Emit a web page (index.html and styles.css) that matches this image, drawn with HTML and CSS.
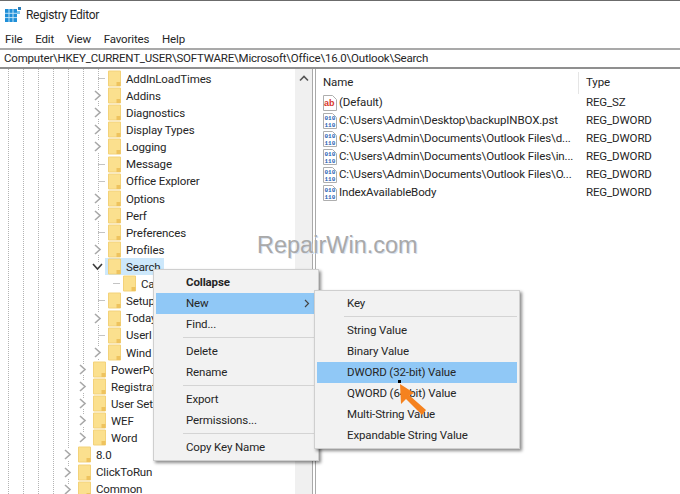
FILE: index.html
```
<!DOCTYPE html>
<html lang="en">
<head>
<meta charset="utf-8">
<title>Registry Editor</title>
<link rel="stylesheet" href="styles.css">
</head>
<body>
<svg class="defs" width="0" height="0" aria-hidden="true">
  <symbol id="folder" viewBox="0 0 13 17">
    <path d="M0.5 1h12v15h-12z" fill="#fbe08e" stroke="#f3d27a" stroke-width="1"/>
    <path d="M8.5 16v-4h4v4z" fill="#eec35e"/>
  </symbol>
  <symbol id="chev" viewBox="0 0 9 11">
    <path d="M2 1l5 4.500-5 4.500" fill="none" stroke="#a8a8a8" stroke-width="1.600"/>
  </symbol>
  <symbol id="chevopen" viewBox="0 0 11 9">
    <path d="M1 2l4.500 5 4.500-5" fill="none" stroke="#3c3c3c" stroke-width="1.600"/>
  </symbol>
  <symbol id="doc" viewBox="0 0 14 16">
    <path d="M0.500 0.500h9l4 4v11h-13z" fill="#fff" stroke="#aeaeae"/>
  </symbol>
</svg>

<div class="window">
  <header class="titlebar">
    <svg class="app-icon" width="18" height="18" viewBox="0 0 18 18" aria-hidden="true">
      <path d="M0 3h12v13H0z" fill="#1f8fd8"/>
      <path d="M4 3v13M8 3v13M0 7.300h12M0 11.600h12" stroke="#cdeafa" stroke-width="0.900"/>
      <path d="M13 1h3v3h-3z" fill="#2b7db8"/>
      <path d="M12 5h3v3h-3z" fill="#7cc4ec"/>
    </svg>
    <span>Registry Editor</span>
  </header>
  <nav class="menubar">
    <span>File</span><span>Edit</span><span>View</span><span>Favorites</span><span>Help</span>
  </nav>
  <div class="address">Computer\HKEY_CURRENT_USER\SOFTWARE\Microsoft\Office\16.0\Outlook\Search</div>

  <main class="panes">
    <section class="tree">
      <i class="guide g1"></i><i class="guide g2"></i><i class="guide g3"></i><i class="guide g4"></i>
      <i class="guide g5"></i><i class="guide g6"></i><i class="guide g7"></i>
      <div class="row lc"><span class="exp dash"></span><span class="node"><svg class="fold"><use href="#folder"/></svg><span>AddInLoadTimes</span></span></div>
      <div class="row lc"><span class="exp"><svg class="chv"><use href="#chev"/></svg></span><span class="node"><svg class="fold"><use href="#folder"/></svg><span>Addins</span></span></div>
      <div class="row lc"><span class="exp"><svg class="chv"><use href="#chev"/></svg></span><span class="node"><svg class="fold"><use href="#folder"/></svg><span>Diagnostics</span></span></div>
      <div class="row lc"><span class="exp"><svg class="chv"><use href="#chev"/></svg></span><span class="node"><svg class="fold"><use href="#folder"/></svg><span>Display Types</span></span></div>
      <div class="row lc"><span class="exp"><svg class="chv"><use href="#chev"/></svg></span><span class="node"><svg class="fold"><use href="#folder"/></svg><span>Logging</span></span></div>
      <div class="row lc"><span class="exp dash"></span><span class="node"><svg class="fold"><use href="#folder"/></svg><span>Message</span></span></div>
      <div class="row lc"><span class="exp dash"></span><span class="node"><svg class="fold"><use href="#folder"/></svg><span>Office Explorer</span></span></div>
      <div class="row lc"><span class="exp"><svg class="chv"><use href="#chev"/></svg></span><span class="node"><svg class="fold"><use href="#folder"/></svg><span>Options</span></span></div>
      <div class="row lc"><span class="exp"><svg class="chv"><use href="#chev"/></svg></span><span class="node"><svg class="fold"><use href="#folder"/></svg><span>Perf</span></span></div>
      <div class="row lc"><span class="exp dash"></span><span class="node"><svg class="fold"><use href="#folder"/></svg><span>Preferences</span></span></div>
      <div class="row lc"><span class="exp"><svg class="chv"><use href="#chev"/></svg></span><span class="node"><svg class="fold"><use href="#folder"/></svg><span>Profiles</span></span></div>
      <div class="row lc"><span class="exp"><svg class="chv-open"><use href="#chevopen"/></svg></span><span class="node selected"><svg class="fold"><use href="#folder"/></svg><span>Search</span></span></div>
      <div class="row ld"><span class="exp dash"></span><span class="node"><svg class="fold"><use href="#folder"/></svg><span>Ca</span></span></div>
      <div class="row lc"><span class="exp dash"></span><span class="node"><svg class="fold"><use href="#folder"/></svg><span>Setup</span></span></div>
      <div class="row lc"><span class="exp"><svg class="chv"><use href="#chev"/></svg></span><span class="node"><svg class="fold"><use href="#folder"/></svg><span>Today</span></span></div>
      <div class="row lc"><span class="exp dash"></span><span class="node"><svg class="fold"><use href="#folder"/></svg><span>UserI</span></span></div>
      <div class="row lc"><span class="exp"><svg class="chv"><use href="#chev"/></svg></span><span class="node"><svg class="fold"><use href="#folder"/></svg><span>Wind</span></span></div>
      <div class="row lb"><span class="exp"><svg class="chv"><use href="#chev"/></svg></span><span class="node"><svg class="fold"><use href="#folder"/></svg><span>PowerPo</span></span></div>
      <div class="row lb"><span class="exp"><svg class="chv"><use href="#chev"/></svg></span><span class="node"><svg class="fold"><use href="#folder"/></svg><span>Registrat</span></span></div>
      <div class="row lb"><span class="exp"><svg class="chv"><use href="#chev"/></svg></span><span class="node"><svg class="fold"><use href="#folder"/></svg><span>User Sett</span></span></div>
      <div class="row lb"><span class="exp"><svg class="chv"><use href="#chev"/></svg></span><span class="node"><svg class="fold"><use href="#folder"/></svg><span>WEF</span></span></div>
      <div class="row lb"><span class="exp"><svg class="chv"><use href="#chev"/></svg></span><span class="node"><svg class="fold"><use href="#folder"/></svg><span>Word</span></span></div>
      <div class="row la"><span class="exp"><svg class="chv"><use href="#chev"/></svg></span><span class="node"><svg class="fold"><use href="#folder"/></svg><span>8.0</span></span></div>
      <div class="row la"><span class="exp"><svg class="chv"><use href="#chev"/></svg></span><span class="node"><svg class="fold"><use href="#folder"/></svg><span>ClickToRun</span></span></div>
      <div class="row la"><span class="exp"><svg class="chv"><use href="#chev"/></svg></span><span class="node"><svg class="fold"><use href="#folder"/></svg><span>Common</span></span></div>
      <div class="scrollbar">
        <svg width="10" height="7" viewBox="0 0 10 7" aria-hidden="true"><path d="M1 5.500l4-4 4 4" fill="none" stroke="#555" stroke-width="1.600"/></svg>
      </div>
    </section>
    <div class="splitter"></div>
    <section class="list">
      <div class="list-head"><span class="col-name">Name</span><span class="col-type">Type</span></div>
      <div class="list-row"><span class="col-name"><svg class="val" viewBox="0 0 14 16" aria-hidden="true"><use href="#doc"/><text x="1" y="11" class="ab-glyph">ab</text></svg><span>(Default)</span></span><span class="col-type">REG_SZ</span></div>
      <div class="list-row"><span class="col-name"><svg class="val" viewBox="0 0 14 16" aria-hidden="true"><use href="#doc"/><text x="1.500" y="7" class="bin-glyph">010</text><text x="1.500" y="13.500" class="bin-glyph">110</text></svg><span>C:\Users\Admin\Desktop\backupINBOX.pst</span></span><span class="col-type">REG_DWORD</span></div>
      <div class="list-row"><span class="col-name"><svg class="val" viewBox="0 0 14 16" aria-hidden="true"><use href="#doc"/><text x="1.500" y="7" class="bin-glyph">010</text><text x="1.500" y="13.500" class="bin-glyph">110</text></svg><span>C:\Users\Admin\Documents\Outlook Files\d...</span></span><span class="col-type">REG_DWORD</span></div>
      <div class="list-row"><span class="col-name"><svg class="val" viewBox="0 0 14 16" aria-hidden="true"><use href="#doc"/><text x="1.500" y="7" class="bin-glyph">010</text><text x="1.500" y="13.500" class="bin-glyph">110</text></svg><span>C:\Users\Admin\Documents\Outlook Files\in...</span></span><span class="col-type">REG_DWORD</span></div>
      <div class="list-row"><span class="col-name"><svg class="val" viewBox="0 0 14 16" aria-hidden="true"><use href="#doc"/><text x="1.500" y="7" class="bin-glyph">010</text><text x="1.500" y="13.500" class="bin-glyph">110</text></svg><span>C:\Users\Admin\Documents\Outlook Files\O...</span></span><span class="col-type">REG_DWORD</span></div>
      <div class="list-row"><span class="col-name"><svg class="val" viewBox="0 0 14 16" aria-hidden="true"><use href="#doc"/><text x="1.500" y="7" class="bin-glyph">010</text><text x="1.500" y="13.500" class="bin-glyph">110</text></svg><span>IndexAvailableBody</span></span><span class="col-type">REG_DWORD</span></div>
    </section>
  </main>
</div>

<div class="watermark">RepairWin.com</div>

<div class="menu menu-main">
  <div class="item strong">Collapse</div>
  <div class="item hl">New<svg class="sub-arrow" width="6" height="9" viewBox="0 0 6 9" aria-hidden="true"><path d="M1 1l3.500 3.500-3.500 3.500" fill="none" stroke="#444" stroke-width="1.200"/></svg></div>
  <div class="item">Find...</div>
  <div class="sep"></div>
  <div class="item">Delete</div>
  <div class="item">Rename</div>
  <div class="sep"></div>
  <div class="item">Export</div>
  <div class="item">Permissions...</div>
  <div class="sep"></div>
  <div class="item">Copy Key Name</div>
</div>

<div class="menu menu-sub">
  <div class="item">Key</div>
  <div class="sep"></div>
  <div class="item">String Value</div>
  <div class="item">Binary Value</div>
  <div class="item hl">DWORD (32-bit) Value</div>
  <div class="item">QWORD (64-bit) Value</div>
  <div class="item">Multi-String Value</div>
  <div class="item">Expandable String Value</div>
</div>

<svg class="pointer" width="40" height="44" viewBox="0 0 40 44" aria-hidden="true">
  <path d="M2 0h3v3H2z" fill="#000"/>
  <path d="M4 4L18 13l-4.500 2.500L30 30l-4 5L10 19l-5 5z" fill="#f5821f"/>
</svg>
</body>
</html>
```
FILE: styles.css
```
* { box-sizing: border-box; }
html, body { margin: 0; height: 100%; overflow: hidden; background: #fff; }
body { position: relative; font: 11.500px/1 Roboto, "Noto Sans", sans-serif; letter-spacing: -0.13px; color: #262626; }
.defs { position: absolute; }
.ab-glyph { font: bold 9px "Liberation Sans", sans-serif; letter-spacing: 0; fill: #d8352a; }
.bin-glyph { font: bold 6px "Liberation Mono", monospace; letter-spacing: 0; fill: #1f5fb4; }

.window { display: flex; flex-direction: column; height: 494px; border-top: 1px solid #6b6b6b; }
.titlebar { display: flex; align-items: center; gap: 3px; height: 27px; padding: 1px 0 0 5px; font-size: 12px; letter-spacing: -0.3px; }
.menubar { display: flex; gap: 12.600px; height: 20px; padding: 6px 0 0 5px; }
.address { height: 21px; padding: 3px 0 0 4px; border-top: 2px solid #a9a9a9; border-bottom: 2px solid #8f8f8f; white-space: nowrap; letter-spacing: -0.2px; }

.panes { flex: 1; display: flex; min-height: 0; }
.tree { position: relative; width: 312px; overflow: hidden; padding-top: 1px; }
.row { position: relative; z-index: 1; display: flex; height: 17.12px; align-items: stretch; white-space: nowrap; }
.la { padding-left: 60px; }
.lb { padding-left: 75px; }
.lc { padding-left: 90px; }
.ld { padding-left: 105px; }
.exp { width: 15px; display: flex; align-items: center; justify-content: center; }
.exp.dash { justify-content: flex-end; }
.exp.dash::before { content: ""; width: 7px; border-top: 1px solid #c4c4c4; }
.chv { width: 9px; height: 11px; background: #fff; }
.chv-open { width: 11px; height: 9px; background: #fff; }
.node { display: flex; align-items: center; padding: 0 3px; }
.node > span { padding-top: 2px; }
.node.selected { background: #cde8fb; }
.fold { width: 13px; height: 17px; margin-right: 5px; flex: none; }

.guide { position: absolute; top: 0; bottom: 0; width: 1px; border-left: 1px dotted #b4b4b4; }
.g1 { left: 8px; }
.g2 { left: 23px; }
.g3 { left: 38px; }
.g4 { left: 53px; }
.g5 { left: 68px; }
.g6 { left: 83px; bottom: 58px; }
.g7 { left: 98px; bottom: 134px; }

.scrollbar { position: absolute; z-index: 2; top: 0; right: 0; bottom: 0; width: 17px; background: #f0f0f0; display: flex; justify-content: center; padding-top: 6px; }
.scrollbar svg { display: block; }
.splitter { width: 4px; border-left: 1px solid #a9a9a9; border-right: 1px solid #a9a9a9; }

.list { flex: 1; min-width: 0; padding-top: 3px; }
.list-head { display: flex; height: 22px; align-items: center; }
.list-row { display: flex; height: 18px; align-items: center; white-space: nowrap; }
.col-name { width: 263px; flex: none; display: flex; align-items: center; padding-left: 7px; }
.list-head .col-name { border-right: 1px solid #e5e5e5; height: 100%; }
.col-type { padding-left: 7px; }
.val { width: 14px; height: 16px; margin-right: 2px; flex: none; }

.menu { position: absolute; z-index: 5; background: #f2f2f2; border: 1px solid #cfcfcf; padding: 2px; box-shadow: 2px 2px 3px rgba(0,0,0,.45); }
.menu-main { left: 153px; top: 269px; width: 166px; }
.menu-sub { left: 314px; top: 290px; width: 206px; }
.item { position: relative; display: flex; align-items: center; height: 21px; padding: 1px 0 0 30px; white-space: nowrap; }
.item.strong { font-weight: 700; }
.item.hl { background: #90c8f6; }
.sep { height: 6px; margin-left: 27px; padding-top: 2px; }
.sep::before { content: ""; display: block; border-top: 1px solid #d4d4d4; }
.sub-arrow { position: absolute; right: 6px; top: 6px; }

.watermark { position: absolute; z-index: 6; left: 257px; top: 234px; font: 23.500px/1 "Liberation Sans", sans-serif; letter-spacing: 0; color: #a9a9a9; text-shadow: 1px 1px 0 #d8e2ef; }
.pointer { position: absolute; z-index: 7; left: 396px; top: 380px; }
```
